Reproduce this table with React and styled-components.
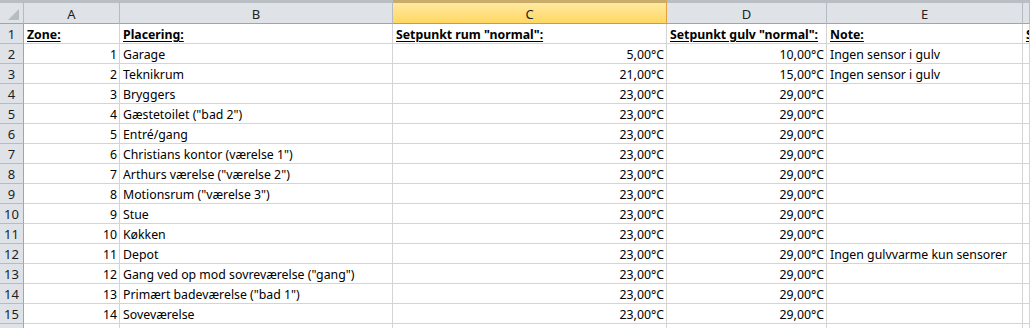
import React from "react";
import styled, { createGlobalStyle } from "styled-components";

const Global = createGlobalStyle`
  html, body { margin: 0; padding: 0; background: #ffffff; }
  body { width: 1030px; height: 328px; overflow: hidden; }
`;

const Sheet = styled.div`
  display: grid;
  grid-template-columns: 24px 96px 273px 274px 160px 196px 1fr;
  grid-template-rows: 24px;
  grid-auto-rows: 20px;
  width: 1030px;
  height: 328px;
  overflow: hidden;
  font-family: "Noto Sans", "Liberation Sans", sans-serif;
  font-size: 12.3px;
  color: #000;
  background: #fff;
`;

const Corner = styled.div`
  position: relative;
  box-sizing: border-box;
  background: #dfe3e8;
  border-top: 3px solid #b9bec5;
  border-right: 1px solid #b5bbc2;
  border-bottom: 1px solid #9ea5ad;
  &::after {
    content: "";
    position: absolute;
    right: 4px;
    bottom: 3px;
    width: 0;
    height: 0;
    border-left: 11px solid transparent;
    border-bottom: 11px solid #b7bcc3;
  }
`;

const ColHeader = styled.div`
  box-sizing: border-box;
  display: flex;
  align-items: center;
  justify-content: center;
  border-top: 3px solid ${(p) => (p.$selected ? "#c9ab6a" : "#b9bec5")};
  border-right: 1px solid ${(p) => (p.$selected ? "#e5a13c" : "#b5bbc2")};
  border-bottom: 1px solid ${(p) => (p.$selected ? "#e0962f" : "#9ea5ad")};
  background: ${(p) =>
    p.$selected ? "linear-gradient(#ffe9a0, #ffd863)" : "#dfe3e8"};
  color: #222;
  font-size: 13px;
  padding-top: 1px;
`;

const RowHeader = styled.div`
  box-sizing: border-box;
  display: flex;
  align-items: center;
  justify-content: center;
  background: #dfe3e8;
  border-right: 1px solid #9ea5ad;
  border-bottom: 1px solid #b5bbc2;
  color: #1e1e1e;
  font-size: 13px;
`;

const Cell = styled.div`
  box-sizing: border-box;
  border-right: 1px solid #d4d4d4;
  border-bottom: 1px solid #d4d4d4;
  padding: 2px 2px 0 3px;
  line-height: 18px;
  white-space: nowrap;
  overflow: hidden;
  text-align: ${(p) => p.$align || "left"};
  font-weight: ${(p) => (p.$head ? 700 : 400)};
  text-decoration: ${(p) => (p.$head ? "underline" : "none")};
  text-underline-offset: 2px;
`;

const rows = [
  [1, "Garage", "5,00°C", "10,00°C", "Ingen sensor i gulv"],
  [2, "Teknikrum", "21,00°C", "15,00°C", "Ingen sensor i gulv"],
  [3, "Bryggers", "23,00°C", "29,00°C", ""],
  [4, "Gæstetoilet (\"bad 2\")", "23,00°C", "29,00°C", ""],
  [5, "Entré/gang", "23,00°C", "29,00°C", ""],
  [6, "Christians kontor (værelse 1\")", "23,00°C", "29,00°C", ""],
  [7, "Arthurs værelse (\"værelse 2\")", "23,00°C", "29,00°C", ""],
  [8, "Motionsrum (\"værelse 3\")", "23,00°C", "29,00°C", ""],
  [9, "Stue", "23,00°C", "29,00°C", ""],
  [10, "Køkken", "23,00°C", "29,00°C", ""],
  [11, "Depot", "23,00°C", "29,00°C", "Ingen gulvvarme kun sensorer"],
  [12, "Gang ved op mod sovreværelse (\"gang\")", "23,00°C", "29,00°C", ""],
  [13, "Primært badeværelse (\"bad 1\")", "23,00°C", "29,00°C", ""],
  [14, "Soveværelse", "23,00°C", "29,00°C", ""],
];

const columns = ["A", "B", "C", "D", "E", ""];

export default function App() {
  return (
    <>
      <Global />
      <Sheet>
        <Corner />
        {columns.map((c, i) => (
          <ColHeader key={"h" + i} $selected={c === "C"}>
            {c}
          </ColHeader>
        ))}

        <RowHeader>1</RowHeader>
        <Cell $head>Zone:</Cell>
        <Cell $head>Placering:</Cell>
        <Cell $head>Setpunkt rum "normal":</Cell>
        <Cell $head>Setpunkt gulv "normal":</Cell>
        <Cell $head>Note:</Cell>
        <Cell $head>Setpunkt</Cell>

        {rows.map((r, i) => (
          <React.Fragment key={i}>
            <RowHeader>{i + 2}</RowHeader>
            <Cell $align="right">{r[0]}</Cell>
            <Cell>{r[1]}</Cell>
            <Cell $align="right">{r[2]}</Cell>
            <Cell $align="right">{r[3]}</Cell>
            <Cell>{r[4]}</Cell>
            <Cell />
          </React.Fragment>
        ))}

        <RowHeader />
        <Cell />
        <Cell />
        <Cell />
        <Cell />
        <Cell />
        <Cell />
      </Sheet>
    </>
  );
}
